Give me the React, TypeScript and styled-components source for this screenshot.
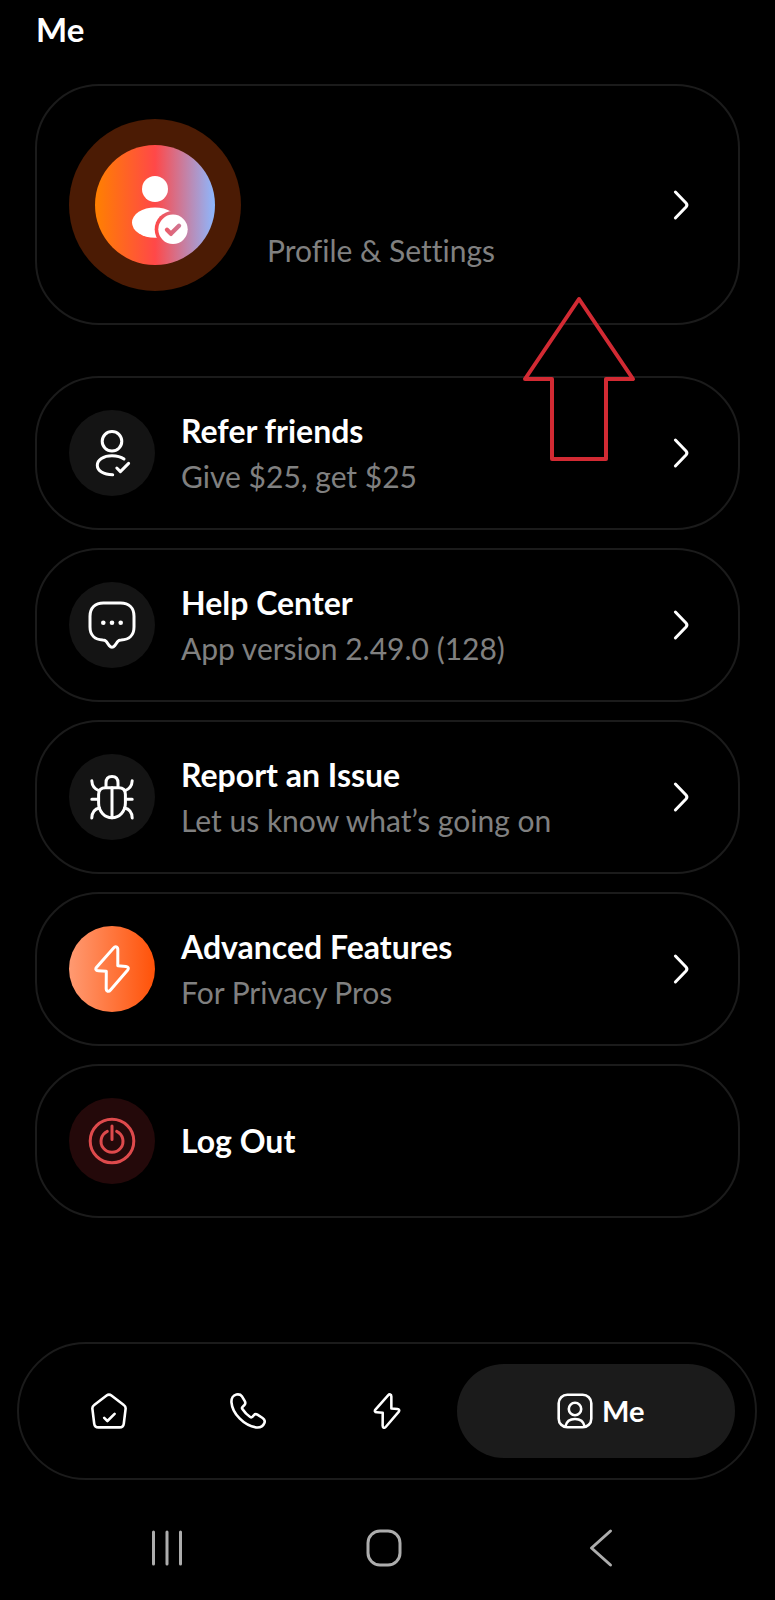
import React from "react";
import styled, { createGlobalStyle } from "styled-components";

const GlobalStyle = createGlobalStyle`
  *, *::before, *::after { box-sizing: border-box; }
  body {
    margin: 0;
    background: #000;
    color: #fff;
    font-family: Lato, "Liberation Sans", sans-serif;
    font-variant-ligatures: none;
  }
`;

const Page = styled.div`
  display: flex;
  flex-direction: column;
  min-height: 100vh;
  background: #000;
`;

const Header = styled.header`
  padding: 8px 36px 0;
`;

const PageTitle = styled.h1`
  margin: 0;
  font-size: 33px;
  line-height: 42px;
  font-weight: 700;
`;

const Content = styled.main`
  display: flex;
  flex-direction: column;
  gap: 51px;
  padding: 34px 35px 0;
`;

const ProfileSection = styled.section`
  position: relative;
`;

const cardStyle = `
  display: flex;
  align-items: center;
  gap: 26px;
  width: 100%;
  padding: 0 32px;
  border: 2px solid #1b1b1b;
  border-radius: 64px;
  background: #000;
  color: #fff;
  font-family: inherit;
  text-align: left;
  text-decoration: none;
  cursor: pointer;
`;

const ProfileCard = styled.a`
  ${cardStyle}
  min-height: 241px;
`;

const RowLink = styled.a`
  ${cardStyle}
  min-height: 154px;
`;

const RowButton = styled.button`
  ${cardStyle}
  min-height: 154px;
`;

const AvatarRing = styled.span`
  flex: none;
  display: grid;
  place-items: center;
  width: 172px;
  height: 172px;
  border-radius: 50%;
  background: #4b1b04;
`;

const Avatar = styled.span`
  display: grid;
  place-items: center;
  width: 120px;
  height: 120px;
  border-radius: 50%;
  background: linear-gradient(90deg, #ff8000 0%, #ff4848 50%, #8cb8ff 100%);
`;

const IconDisc = styled.span<{ $fill: string; $color: string }>`
  flex: none;
  display: grid;
  place-items: center;
  width: 86px;
  height: 86px;
  border-radius: 50%;
  background: ${(p) => p.$fill};
  color: ${(p) => p.$color};
`;

const TextBlock = styled.span<{ $low?: boolean }>`
  flex: 1;
  display: flex;
  flex-direction: column;
  gap: 3px;
  min-width: 0;
  align-self: ${(p) => (p.$low ? "flex-end" : "auto")};
  padding-bottom: ${(p) => (p.$low ? "52px" : "0")};
`;

const Title = styled.span`
  font-size: 32px;
  line-height: 42px;
  font-weight: 700;
`;

const Subtitle = styled.span`
  font-size: 30px;
  line-height: 42px;
  font-weight: 400;
  color: #808080;
`;

const List = styled.ul`
  display: flex;
  flex-direction: column;
  gap: 18px;
  margin: 0;
  padding: 0;
  list-style: none;
`;

const Stroke = styled.svg<{ $weight?: number }>`
  flex: none;
  display: block;
  fill: none;
  stroke: currentColor;
  stroke-width: ${(p) => p.$weight ?? 3}px;
  stroke-linecap: round;
  stroke-linejoin: round;
`;

const Pointer = styled.svg`
  position: absolute;
  top: 208px;
  right: 102px;
  fill: none;
  stroke: #d22a33;
  stroke-width: 4px;
  stroke-linejoin: round;
  pointer-events: none;
`;

const TabBar = styled.nav`
  display: grid;
  grid-template-columns: repeat(3, 1fr) 2fr;
  margin: 124px 18px 0 17px;
  padding: 20px;
  border: 2px solid #1b1b1b;
  border-radius: 69px;
`;

const Tab = styled.a<{ $active?: boolean }>`
  display: flex;
  align-items: center;
  justify-content: center;
  gap: 9px;
  height: 94px;
  padding-left: ${(p) => (p.$active ? "10px" : "0")};
  border-radius: 47px;
  background: ${(p) => (p.$active ? "#1b1b1b" : "transparent")};
  color: #fff;
  font-size: 29px;
  line-height: 42px;
  font-weight: 700;
  text-decoration: none;
`;

const SystemBar = styled.div`
  display: grid;
  grid-template-columns: repeat(3, 1fr);
  padding: 44px 66px 24px 58px;
`;

const SystemButton = styled.button`
  display: flex;
  justify-content: center;
  padding: 4px 0;
  border: 0;
  background: none;
  color: #adadad;
  cursor: pointer;
`;

const BOLT =
  "M25.4 3.2 L8.6 22.2 C7.1 24 7.9 25.6 10.2 25.7 L18.3 26.3 L18.2 43.6 C18.2 46.6 20.7 47.2 22.5 45 L39.5 25.2 C41 23.3 40.2 21.6 38 21.4 L29.8 20.8 V4.6 C29.8 1.6 27.3 1 25.4 3.2 Z";

function Chevron() {
  return (
    <Stroke width="48" height="48" viewBox="0 0 48 48" aria-hidden="true">
      <path d="M17.4 11 L28 22 Q29.8 24 28 26 L17.4 37" />
    </Stroke>
  );
}

function AvatarIcon() {
  return (
    <svg width="120" height="120" viewBox="0 0 120 120" aria-hidden="true">
      <defs>
        <mask id="avatar-body">
          <rect width="120" height="120" fill="#fff" />
          <circle cx="78" cy="84.3" r="18.3" fill="#000" />
        </mask>
        <mask id="avatar-check">
          <rect width="120" height="120" fill="#fff" />
          <path
            d="M72 84.8 L75.9 88.8 L84 80.8"
            fill="none"
            stroke="#000"
            strokeWidth="4.4"
            strokeLinecap="round"
            strokeLinejoin="round"
          />
        </mask>
      </defs>
      <circle cx="60" cy="44" r="13" fill="#fff" />
      <ellipse cx="60" cy="77.6" rx="23" ry="15.2" fill="#fff" mask="url(#avatar-body)" />
      <circle cx="78" cy="84.3" r="14.7" fill="#fff" mask="url(#avatar-check)" />
    </svg>
  );
}

function ReferIcon() {
  return (
    <Stroke width="48" height="48" viewBox="0 0 48 48" aria-hidden="true">
      <circle cx="24" cy="12.3" r="9.8" />
      <path d="M36 30 C33 27.8 28.6 26.7 24 26.7 C15.4 26.7 9.3 30.8 9.3 36.3 C9.3 41.8 15.4 45.7 24.7 45.7" />
      <path d="M28.8 39 L32.4 42.6 L40.6 34.4" />
    </Stroke>
  );
}

function HelpIcon() {
  return (
    <Stroke width="48" height="48" viewBox="0 0 48 48" aria-hidden="true">
      <path d="M15.4 2 H32.6 C41 2 46 7 46 15.2 V26 C46 34.2 41 38.8 33.2 39 C31.6 39 30.5 39.5 29.6 40.7 L26.6 44.8 C25 46.8 23 46.8 21.4 44.8 L18.4 40.7 C17.5 39.5 16.4 39 14.8 39 C7 38.8 2 34.2 2 26 V15.2 C2 7 7 2 15.4 2 Z" />
      <g fill="currentColor" stroke="none">
        <circle cx="15.3" cy="21.7" r="2.3" />
        <circle cx="24" cy="21.7" r="2.3" />
        <circle cx="32.7" cy="21.7" r="2.3" />
      </g>
    </Stroke>
  );
}

function BugIcon() {
  return (
    <Stroke width="48" height="48" viewBox="0 0 48 48" aria-hidden="true">
      <path d="M10.6 21.5 C10.6 17 13.2 14.7 17.4 14.7 H30.6 C34.8 14.7 37.4 17 37.4 21.5 V30 C37.4 38.2 31.6 44.7 24 44.7 C16.4 44.7 10.6 38.2 10.6 30 Z" />
      <path d="M24 14.7 V44.7 M18 14 V10 C18 5.8 20.4 3.5 24 3.5 C27.6 3.5 30 5.8 30 10 V14" />
      <path d="M3.8 7.8 C4 12.6 6.4 16 11 17.6 M44.2 7.8 C44 12.6 41.6 16 37 17.6" />
      <path d="M3.8 26.2 H10.6 M37.4 26.2 H44.2" />
      <path d="M3.8 45 C4 39.6 6.6 36 11.4 35 M44.2 45 C44 39.6 41.4 36 36.6 35" />
    </Stroke>
  );
}

function BoltIcon({ size = 48, weight = 3 }: { size?: number; weight?: number }) {
  return (
    <Stroke $weight={weight} width={size} height={size} viewBox="0 0 48 48" aria-hidden="true">
      <path d={BOLT} />
    </Stroke>
  );
}

function PowerIcon() {
  return (
    <Stroke width="48" height="48" viewBox="0 0 48 48" aria-hidden="true">
      <circle cx="24" cy="24" r="21.8" />
      <path d="M19.3 14.4 A11 11 0 1 0 28.7 14.4 M24 9 V22.6" />
    </Stroke>
  );
}

function HomeIcon() {
  return (
    <Stroke $weight={2.6} width="36" height="36" viewBox="0 0 36 36" aria-hidden="true">
      <path d="M15.6 2.5 C17 1.4 19 1.4 20.4 2.5 L32.8 12 C34.2 13 34.8 14.2 34.6 15.8 L32.8 30.6 C32.5 33 31 34.4 28.6 34.4 H7.4 C5 34.4 3.5 33 3.2 30.6 L1.4 15.8 C1.2 14.2 1.8 13 3.2 12 Z M13.2 24.8 L16.4 28 L23.6 20.8" />
    </Stroke>
  );
}

function PhoneIcon() {
  return (
    <Stroke $weight={2.6} width="36" height="36" viewBox="0 0 36 36" aria-hidden="true">
      <path d="M11.8 3.2 L14.8 8.2 C15.7 9.8 15.5 10.8 14.4 12 L12.6 13.8 C11.8 14.6 11.8 15.2 12.4 16 C14.6 19.4 17.2 22 20.2 24 C21.2 24.6 21.8 24.4 22.6 23.6 L24 22 C25 20.8 26.2 20.8 27.4 21.6 L32.6 25 C34.6 26.4 35.2 28 34.4 30 C33.2 33 29.8 34.8 26 34.4 C14 32.6 2.4 20.6 1.5 9.6 C1.1 5.4 3.2 2.2 6.4 1.5 C8.8 1.1 10.6 1.4 11.8 3.2 Z" />
    </Stroke>
  );
}

function MeIcon() {
  return (
    <Stroke $weight={2.6} width="36" height="36" viewBox="0 0 36 36" aria-hidden="true">
      <rect x="1.7" y="1.7" width="32.6" height="32.6" rx="8.6" />
      <circle cx="18" cy="16" r="6.2" />
      <path d="M8.4 33.4 C9.4 28.8 13 26 18 26 C23 26 26.6 28.8 27.6 33.4" />
    </Stroke>
  );
}

type RowData = {
  title: string;
  subtitle: string;
  icon: React.ReactNode;
  fill: string;
};

const rows: RowData[] = [
  { title: "Refer friends", subtitle: "Give $25, get $25", icon: <ReferIcon />, fill: "#141414" },
  { title: "Help Center", subtitle: "App version 2.49.0 (128)", icon: <HelpIcon />, fill: "#141414" },
  { title: "Report an Issue", subtitle: "Let us know what’s going on", icon: <BugIcon />, fill: "#141414" },
  {
    title: "Advanced Features",
    subtitle: "For Privacy Pros",
    icon: <BoltIcon />,
    fill: "linear-gradient(90deg, #ff9a72 0%, #ff5208 100%)",
  },
];

export default function App() {
  return (
    <Page>
      <GlobalStyle />
      <Header>
        <PageTitle>Me</PageTitle>
      </Header>
      <Content>
        <ProfileSection>
          <ProfileCard href="#profile">
            <AvatarRing>
              <Avatar>
                <AvatarIcon />
              </Avatar>
            </AvatarRing>
            <TextBlock $low>
              <Subtitle>Profile &amp; Settings</Subtitle>
            </TextBlock>
            <Chevron />
          </ProfileCard>
          <Pointer width="118" height="174" viewBox="0 0 118 174" aria-hidden="true">
            <path d="M59 7 L113 87 H86 V167 H32 V87 H5 Z" />
          </Pointer>
        </ProfileSection>
        <List>
          {rows.map((row) => (
            <li key={row.title}>
              <RowLink href="#">
                <IconDisc $fill={row.fill} $color="#fff">
                  {row.icon}
                </IconDisc>
                <TextBlock>
                  <Title>{row.title}</Title>
                  <Subtitle>{row.subtitle}</Subtitle>
                </TextBlock>
                <Chevron />
              </RowLink>
            </li>
          ))}
          <li>
            <RowButton type="button">
              <IconDisc $fill="#24090a" $color="#de4a4c">
                <PowerIcon />
              </IconDisc>
              <TextBlock>
                <Title>Log Out</Title>
              </TextBlock>
            </RowButton>
          </li>
        </List>
      </Content>
      <TabBar aria-label="Main">
        <Tab href="#home" aria-label="Home">
          <HomeIcon />
        </Tab>
        <Tab href="#calls" aria-label="Calls">
          <PhoneIcon />
        </Tab>
        <Tab href="#actions" aria-label="Actions">
          <BoltIcon size={36} weight={3.4} />
        </Tab>
        <Tab href="#me" $active aria-current="page">
          <MeIcon />
          Me
        </Tab>
      </TabBar>
      <SystemBar>
        <SystemButton type="button" aria-label="Recent apps">
          <Stroke width="40" height="40" viewBox="0 0 40 40" aria-hidden="true">
            <path d="M6.5 4 V36 M20 4 V36 M33.5 4 V36" />
          </Stroke>
        </SystemButton>
        <SystemButton type="button" aria-label="Home screen">
          <Stroke width="40" height="40" viewBox="0 0 40 40" aria-hidden="true">
            <rect x="4" y="3" width="32" height="34" rx="12" />
          </Stroke>
        </SystemButton>
        <SystemButton type="button" aria-label="Back">
          <Stroke width="40" height="40" viewBox="0 0 40 40" aria-hidden="true">
            <path d="M29.5 3 L10.5 20 L29.5 37" />
          </Stroke>
        </SystemButton>
      </SystemBar>
    </Page>
  );
}
